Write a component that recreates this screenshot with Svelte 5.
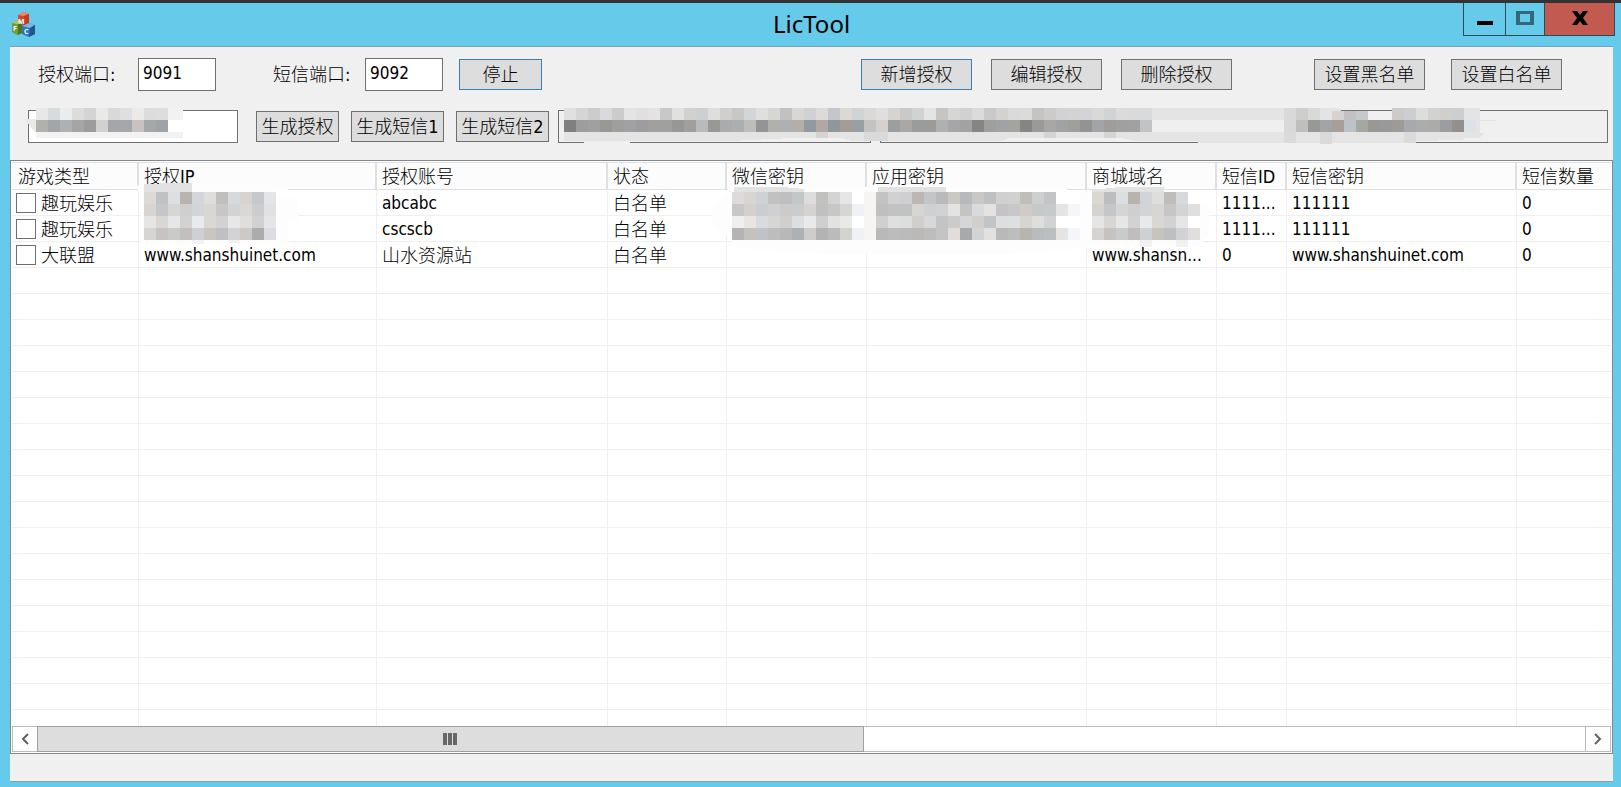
<script>
  let authPort = $state('9091');
  let smsPort = $state('9092');

  const columns = [
    { label: '游戏类型', width: 127 },
    { label: '授权IP', width: 238 },
    { label: '授权账号', width: 231 },
    { label: '状态', width: 119 },
    { label: '微信密钥', width: 140 },
    { label: '应用密钥', width: 220 },
    { label: '商城域名', width: 130 },
    { label: '短信ID', width: 70 },
    { label: '短信密钥', width: 230 },
    { label: '短信数量', width: 130 }
  ];
  const tableWidth = columns.reduce((sum, c) => sum + c.width, 0);

  const rows = $state([
    { checked: false, cells: ['趣玩娱乐', '', 'abcabc', '白名单', '', '', '', '1111...', '111111', '0'] },
    { checked: false, cells: ['趣玩娱乐', '', 'cscscb', '白名单', '', '', '', '1111...', '111111', '0'] },
    { checked: false, cells: ['大联盟', 'www.shanshuinet.com', '山水资源站', '白名单', '', '', 'www.shansn...', '0', 'www.shanshuinet.com', '0'] }
  ]);
  const emptyRows = Array(18).fill(0);

  // Censor tiles: 12px squares, one string of colours per line.
  const CELL = 12;
  const tiles = (x, y, lines) =>
    lines.flatMap((line, r) =>
      line.split(' ').map((c, i) => ({ x: x + i * CELL, y: y + r * CELL, fill: '#' + c }))
    );

  const nameTiles = tiles(36, 108, [
    'e8e8e6 d8dbdc ebeced dcdcdb d3d4d4 e9e9e9 d9d9da dfdfe1 ebeae8 dadddc dbdedd',
    'b0b0ac a4a5a9 adb1b3 a5a5a7 9c9c9b d2d1cd a4a6a9 a4a8ac c9c2c1 a5a8a8 9ca3a9'
  ]);

  const keyTiles = [
    ...tiles(564, 108, [
      'e0e0e0 d6d5d3 cccccc d9dadc cbcbcb e4e4e4 e0e0e0 e3e3e3 c8c8c8 e2e1df d0d2d1 cdd0d1 dedede d0cfcd c7c7c7 d4d5d7 dfdfdf d6d6d3 c1c1c1 d7d7d7 cfd1d3 dddbd9 c4c6c9 dcd9d5 d1d4d5 dad9d7 dfdfdf d5d4d1 c9c9c8 d1d3d2 e4e4e4 c6c5c3 d6d6d5 cfd1d3 dbdbdb cacaca d3d2d1 dadad9 dbdbdb c4c4c4 cdcbc9 d1d2d1 d3d3d4 d2d4d6 d9d9d7 d1d4d7 dadbda d9dada d9dada',
      '7f8081 9d9d9d a0a0a0 989895 a09f9c a0a1a4 9d9d9f a29f9d 9fa19f 979795 a19f9d b9babc 989894 a9abad abafb0 bfbdb9 949496 afb1aa aeb0b3 b3aea7 9399a3 b1a8a3 8f979e a59c96 989fa7 c4c3c1 d6d1cd 9c9ea0 aaa7a4 999c9d 9d9b98 adb1b2 a6a6a6 a2a2a2 858584 a09f9b a1a2a5 a2a49f 868582 9a9a9b a8a7a4 9fa3a5 a19f9c 939393 a1a5a9 9f9c99 a0a09f a1a1a4 c1c3c5'
    ]),
    ...tiles(1284, 108, [
      'd9d9d9 cfcecc d9d9d8 e4e4e4',
      'd9d9d9 bfbfbd 989896 a1a5a8 a89f99 bbc3ca a5a7a1 9b9893 979a98 9e9b97 a7a9ae aaacad adaba7 9c9da0 938f8c dce2e7'
    ]),
    ...tiles(1392, 108, ['cccbc9 ccced1 dddedb d2d2d1 d0cfcd cccfd1 e4e4e4'])
  ];

  const listTiles = [
    ...tiles(144, 192, [
      'ddd9d6 bfc1c3 dce0e2 b8b5b1 d3d6da dfdedc c0bfbd d7dadc d7d4cf c5c9cc e4e5e7',
      'd8d4d1 c5c6c8 d6d7d5 d0cfd0 d3d4d6 d9d7d3 c6c7c6 d3d3d4 d9d8d6 cdcccd e0e1e4',
      'e5e5e5 d9d6d6 e6e6e6 d3d1d2 e9eaec d9d8d4 d2d2d3 e6e7e9 e0dedc d1d1d3 e5e5e7',
      'd6d5d4 c7c3c2 c9caca c2bfbe ced0d2 c9c5bf bfc0c1 d3d3d6 cec9c6 acacad dddde1'
    ]),
    ...tiles(732, 192, [
      'dedad9 d7d6d2 cfd1d5 c1c1c1 bfbfbf c4c7c7 dddddd c1c1c0 d4d4d4 e5e6e8 ffffff f6f5f3',
      'c7c7c7 d4d1cd cbcdd1 cfd0d2 cdcacb cbcccd d6d2cf c0c0c0 c7c7c7 d6d6d3 eff1f4 f6f5f3',
      'efefed e7e6e2 d9dcde d6d6d4 d1cfcd dcdee0 e8e9ea d1cfcd e2e2e2 e8e9e9 ffffff f6f5f3',
      'b5b3b3 c5c1bb c1c2c6 bdbdbd b8b8b8 adb1b4 cfcdcb b2b3b2 bbbbbb d3d3d0 eff1f4 f6f5f3'
    ]),
    ...tiles(876, 192, [
      'c3c3c3 d0d1d3 cfcfd1 bcb7b3 c4c5c7 bababa cac9c4 b6babd cac7c4 bfc0c2 d0d0d1 d1d1d2 bfbebb cecfd1 c3c4c5 ffffff ffffff',
      'bfbfbf c2c2c2 c1c2c2 d6d6d5 d0d0d0 d1d2d3 e4e3e1 c4c4c4 d9dadc e5e2e4 c4c4c4 c8c8c8 d0cbc7 c5c9ca c7cacb e6e4e2 f4f6f9',
      'd0d0d0 dddfe0 dcdddd d2cecb d7d8d9 c4c4c4 cbcbcb d4d6d7 d1cfcc c3c4c6 dddedf dedfe0 d6d5d0 dededb d1d2d3 ffffff ffffff',
      'b9b9b9 bbbcbb bbbbbb bab9b7 bdbdbc c4c4c5 e2dddb a8a9ab d2d3d5 e2e0e1 b9b9b9 bdbdbd b8b4ae b8bcbf bbbfc1 e6e4e2 f4f6f9'
    ]),
    ...tiles(1092, 192, [
      'dbd7d3 bcbdbf dbdfe2 b8b3ad d2d4da dededc bfbdbb d7dadc ffffff',
      'd6d2ce c5c6c8 d5d6d4 d0cfcf d3d4d5 d8d6d2 c6c6c6 d3d4d3 e0dfde',
      'e5e5e5 d8d5d5 e6e6e6 d3d2d2 e8e9eb d8d7d2 d2d2d2 e5e6e8 ffffff',
      'd5d4d3 c6c2c0 c9caca c0bdbd ced0d2 c7c3bd bebfc1 d2d2d4 e0dfde'
    ])
  ];

  // plain latin cells use the slightly smaller UI size
  const isLatin = (text) => /^[\x20-\x7e]*$/.test(text);
</script>

{#snippet mosaic(cells)}
  {#each cells as c}
    <rect x={c.x} y={c.y} width={CELL} height={CELL} fill={c.fill} />
  {/each}
{/snippet}

<div class="window">
  <header class="titlebar">
    <svg class="app-icon" viewBox="0 0 24 25" aria-hidden="true">
      <path d="M6 3l6-3 5 2v10l-5 3-6-2z" fill="#d8492b" />
      <path d="M6 3l6-3 5 2-5 2z" fill="#f08a66" />
      <path d="M12 4l5-2v10l-5 3z" fill="#c23a22" />
      <path d="M0 11l5-3 5 2v11l-5 2-5-3z" fill="#6f9c35" />
      <path d="M0 11l5-3 5 2-4 2z" fill="#a9c96c" />
      <path d="M6 12l4-2v11l-4 2z" fill="#4b7620" />
      <path d="M10 14l7-3 6 2v9l-6 3-7-3z" fill="#2d78bd" />
      <path d="M10 14l7-3 6 2-5 3z" fill="#7db7e0" />
      <path d="M18 16l5-3v9l-6 3z" fill="#1c5795" />
      <text x="6" y="12" font-size="7">M</text>
      <text x="1" y="19" font-size="7">F</text>
      <text x="12" y="22" font-size="7">C</text>
    </svg>
    <h1>LicTool</h1>
    <div class="controls">
      <button class="min" aria-label="最小化">
        <svg viewBox="0 0 16 14" width="16" height="14"><path d="M0 10h16v4H0z" fill="#000" /></svg>
      </button>
      <button class="max" aria-label="最大化">
        <svg viewBox="0 0 18 14" width="18" height="14"><path d="M0 0h18v14H0zM4 3v8h10V3z" fill="#33687a" fill-rule="evenodd" /></svg>
      </button>
      <button class="close" aria-label="关闭">
        <svg viewBox="0 0 16 14" width="16" height="14"><path d="M0 0h5l3 4 3-4h5l-5 7 5 7h-5l-3-4-3 4H0l5-7z" fill="#000" /></svg>
      </button>
    </div>
  </header>

  <main class="client">
    <form class="toolbar" onsubmit={(e) => e.preventDefault()}>
      <label class="auth-label" for="auth-port">授权端口:</label>
      <input id="auth-port" class="port" bind:value={authPort} />
      <label class="sms-label" for="sms-port">短信端口:</label>
      <input id="sms-port" class="port" bind:value={smsPort} />
      <button type="button" class="btn stop active">停止</button>
      <div class="group manage">
        <button type="button" class="btn wide active">新增授权</button>
        <button type="button" class="btn wide">编辑授权</button>
        <button type="button" class="btn wide">删除授权</button>
      </div>
      <div class="group lists">
        <button type="button" class="btn wide">设置黑名单</button>
        <button type="button" class="btn wide">设置白名单</button>
      </div>
    </form>

    <div class="toolbar generate">
      <div class="name-field">
        <input aria-label="授权名称" />
        <svg class="censor name-censor" viewBox="24 108 160 36" width="160" height="36" aria-hidden="true">
          <path d="M36 108h147v12H36zM36 132h147v6H36z" fill="#f2f2f2" />
          <path d="M36 120h147v12H36z" fill="#fff" />
          <path d="M24 119h12v14z" fill="#e9e9e6" />
          {@render mosaic(nameTiles)}
        </svg>
      </div>
      <button type="button" class="btn gen-auth">生成授权</button>
      <button type="button" class="btn gen-sms">生成短信1</button>
      <button type="button" class="btn gen-sms">生成短信2</button>
      <div class="results">
        <input class="result auth-key" readonly aria-label="授权密钥" />
        <input class="result sms-key" readonly aria-label="短信密钥1" />
        <input class="result last-key" readonly aria-label="短信密钥2" />
        <svg class="censor key-censor" viewBox="558 108 940 38" width="940" height="38" aria-hidden="true">
          <path d="M564 108h775l2 2v10h51v-10l2-2h86v12h16v1h-16v12h4l-5 5h-15l-2 2h-24l-1 1h-24v2H1198v-2H564z" fill="#e4e4e4" />
          <path d="M1152 120h132v12h-132z" fill="#efefef" />
          <path d="M584 141h46v2h-46zM730 141l62-3h50l10 3zM1002 141l6-3h114l14 3z" fill="#f0f0f0" />
          <path d="M816 132h12v6h-12zM1044 132h12v6h-12zM1104 132h12v6h-12z" fill="#d4d4d4" />
          <path d="M864 132h24v9h-24zM1284 132h12v11h-12zM1320 132h12v12h-12zM1404 132h12v11h-12z" fill="#dadada" />
          <path d="M1332 111h12v9h-12z" fill="#d5d2d0" />
          <path d="M1344 111h12v9h-12z" fill="#c2c0c0" />
          <path d="M1356 111h12v9h-12z" fill="#c7c8ca" />
          {@render mosaic(keyTiles)}
        </svg>
      </div>
    </div>

    <section class="list">
      <div class="viewport">
        <table style="width: {tableWidth}px">
          <colgroup>
            {#each columns as col}
              <col style="width: {col.width}px" />
            {/each}
          </colgroup>
          <thead>
            <tr>
              {#each columns as col}
                <th scope="col">{col.label}</th>
              {/each}
            </tr>
          </thead>
          <tbody>
            {#each rows as row}
              <tr>
                {#each row.cells as cell, i}
                  {#if i === 0}
                    <td class="first">
                      <label><input type="checkbox" bind:checked={row.checked} /><span>{cell}</span></label>
                    </td>
                  {:else}
                    <td class:latin={isLatin(cell)}>{cell}</td>
                  {/if}
                {/each}
              </tr>
            {/each}
            {#each emptyRows as _}
              <tr>
                {#each columns as _col}
                  <td></td>
                {/each}
              </tr>
            {/each}
          </tbody>
        </table>
        <svg class="censor list-censor" viewBox="128 180 1088 74" width="1088" height="74" aria-hidden="true">
          <path d="M129 188l14-4 36-1h70l18 2 21 4v3h-12v6h22v22h-10v22h-30l-18 2H141v-54z" fill="#fdfdfd" />
          <path d="M711 222l2-12 14-20 8-3h332v5h24l7-3 60-2 12 6 38 12 2 26-10 14-10 2H1094l-40 3-60 5H840l-100-7-14-12z" fill="#fdfdfd" />
          <path d="M144 184l30-1h18v9h-48zM734 187h48l22 2v3h-70zM878 187h68v5h-68zM1092 190l28-3h44v5h-72z" fill="#e2e2e2" />
          <path d="M1140 240h12v7h-12zM1176 240h12v7h-12zM192 240h12v4h-12zM228 240h12v3h-12z" fill="#f1f1f1" />
          {@render mosaic(listTiles)}
        </svg>
      </div>
      <div class="scrollbar">
        <button class="arrow" aria-label="向左滚动">
          <svg viewBox="0 0 8 12" width="8" height="12"><path d="M7 1L2 6l5 5" fill="none" stroke="#606060" stroke-width="2" /></svg>
        </button>
        <div class="track">
          <div class="thumb"><i></i><i></i><i></i></div>
        </div>
        <button class="arrow right" aria-label="向右滚动">
          <svg viewBox="0 0 8 12" width="8" height="12"><path d="M1 1l5 5-5 5" fill="none" stroke="#606060" stroke-width="2" /></svg>
        </button>
      </div>
    </section>
  </main>
</div>

<style>
  :global(body) { margin: 0; }
  .window { box-sizing: border-box; height: 100vh; min-height: 400px; display: flex; flex-direction: column;
    border-top: 3px solid #323232; padding: 0 8px 5px 10px; background: #66caea; color: #000;
    font-family: "DejaVu Sans Condensed", "Noto Sans CJK SC", sans-serif; font-size: 18px; font-weight: 300; line-height: 24px; }
  button, input { box-sizing: border-box; font: inherit; color: inherit; margin: 0; border-radius: 0; }

  .titlebar { height: 43px; flex: none; display: grid; grid-template-columns: 1fr auto 1fr; align-items: start; }
  .app-icon { width: 24px; height: 25px; margin: 9px 0 0 2px; }
  .app-icon text { font-family: "Open Sans", sans-serif; font-weight: 700; fill: #fff; }
  h1 { margin: 0; padding-top: 5px; font: 400 24px/32px "Noto Sans", sans-serif; }
  .controls { justify-self: end; display: flex; height: 32px; margin-right: -2px;
    border: 1px solid #2c4b57; border-top: 0; }
  .controls button { display: flex; align-items: flex-start; justify-content: center; padding: 8px 0 0;
    border: 0; border-right: 1px solid #2c4b57; background: none; }
  .controls .min { width: 42px; }
  .controls .max { width: 39px; }
  .controls .close { width: 69px; border-right: 0; background: #c35a50; }
  .controls svg { display: block; }

  .client { flex: 1; min-height: 0; display: flex; flex-direction: column; background: #f0f0f0;
    border-top: 1px solid #7d9fb8; border-bottom: 1px solid #8aa0ac; }

  .toolbar { flex: none; display: flex; align-items: center; height: 33px; margin-top: 11px; white-space: nowrap; }
  .auth-label { width: 100px; padding-left: 28px; }
  .sms-label { width: 92px; padding-left: 57px; }
  .port { width: 78px; height: 33px; padding: 0 4px 4px; border: 1px solid #707070; background: #fff; font-size: 17px; }
  .btn { flex: none; height: 31px; padding: 0; border: 1px solid #707070; background: #ddd; text-align: center; }
  .btn.active { border-color: #3c7fb1; }
  .stop { width: 83px; margin-left: 16px; }
  .wide { width: 111px; }
  .group { display: flex; }
  .manage { gap: 19px; margin-left: auto; }
  .lists { gap: 26px; margin: 0 51px 0 82px; }

  .generate { margin-top: 19px; padding: 0 5px 0 18px; }
  .name-field { position: relative; display: flex; width: 210px; margin-right: 18px; }
  .name-field input { width: 100%; height: 33px; border: 1px solid #707070; background: #fff; }
  .gen-auth { width: 83px; margin-right: 12px; }
  .gen-sms { width: 93px; margin-right: 12px; }
  .gen-sms + .gen-sms { margin-right: 9px; }
  .results { position: relative; flex: 1; min-width: 0; display: flex; gap: 9px; }
  .result { height: 33px; min-width: 0; border: 1px solid #707070; background: #f0f0f0; }
  .auth-key { flex: 0 1 313px; }
  .sms-key { flex: 0 1 319px; }
  .last-key { flex: 1; margin-left: 72px; }

  .censor { position: absolute; display: block; pointer-events: none; shape-rendering: crispEdges; }
  .name-censor { left: -4px; top: -2px; }
  .key-censor { left: 0; top: -2px; }
  .list-censor { left: 116px; top: 18px; }

  .list { flex: 1; min-height: 0; display: flex; flex-direction: column; margin: 17px 0 27px;
    border: 1px solid #828790; padding: 1px; background: #fff; }
  .viewport { position: relative; flex: 1; min-height: 0; overflow: hidden; }
  table { table-layout: fixed; border-collapse: separate; border-spacing: 0; }
  th, td { box-sizing: border-box; padding: 2px 0 0 5px; text-align: left; font-weight: 300;
    white-space: nowrap; overflow: hidden; line-height: 23px; }
  th { height: 28px; padding-top: 0; background: #fcfcfc; border: solid #e0e0e0; border-width: 1px 2px 1px 0; }
  th:first-child { padding-left: 6px; }
  td { height: 26px; border: solid #efefef; border-width: 0 1px 1px 0; }
  td.latin { font-size: 17px; }
  td.first { padding: 0 0 0 4px; }
  td.first label { display: flex; align-items: center; gap: 5px; }
  td.first span { padding-top: 2px; }
  td.first input { appearance: none; flex: none; width: 20px; height: 20px; border: 1px solid #707070; background: #fff; }
  td.first input:checked { background: #707070; }

  .scrollbar { flex: none; display: flex; box-sizing: border-box; height: 26px; border: 1px solid #bcbcbc; background: #fff; }
  .arrow { width: 24px; padding: 0; border: 0; background: #fff; display: flex; align-items: center; justify-content: center; }
  .arrow.right { width: 25px; border-left: 1px solid #bcbcbc; }
  .track { flex: 1; display: flex; margin: -1px 0; }
  .thumb { box-sizing: border-box; width: 53.4%; display: flex; align-items: center; justify-content: center; gap: 1px;
    border: 1px solid #a0a0a0; background: #ddd; }
  .thumb i { width: 4px; height: 12px; background: #686868; }
</style>
